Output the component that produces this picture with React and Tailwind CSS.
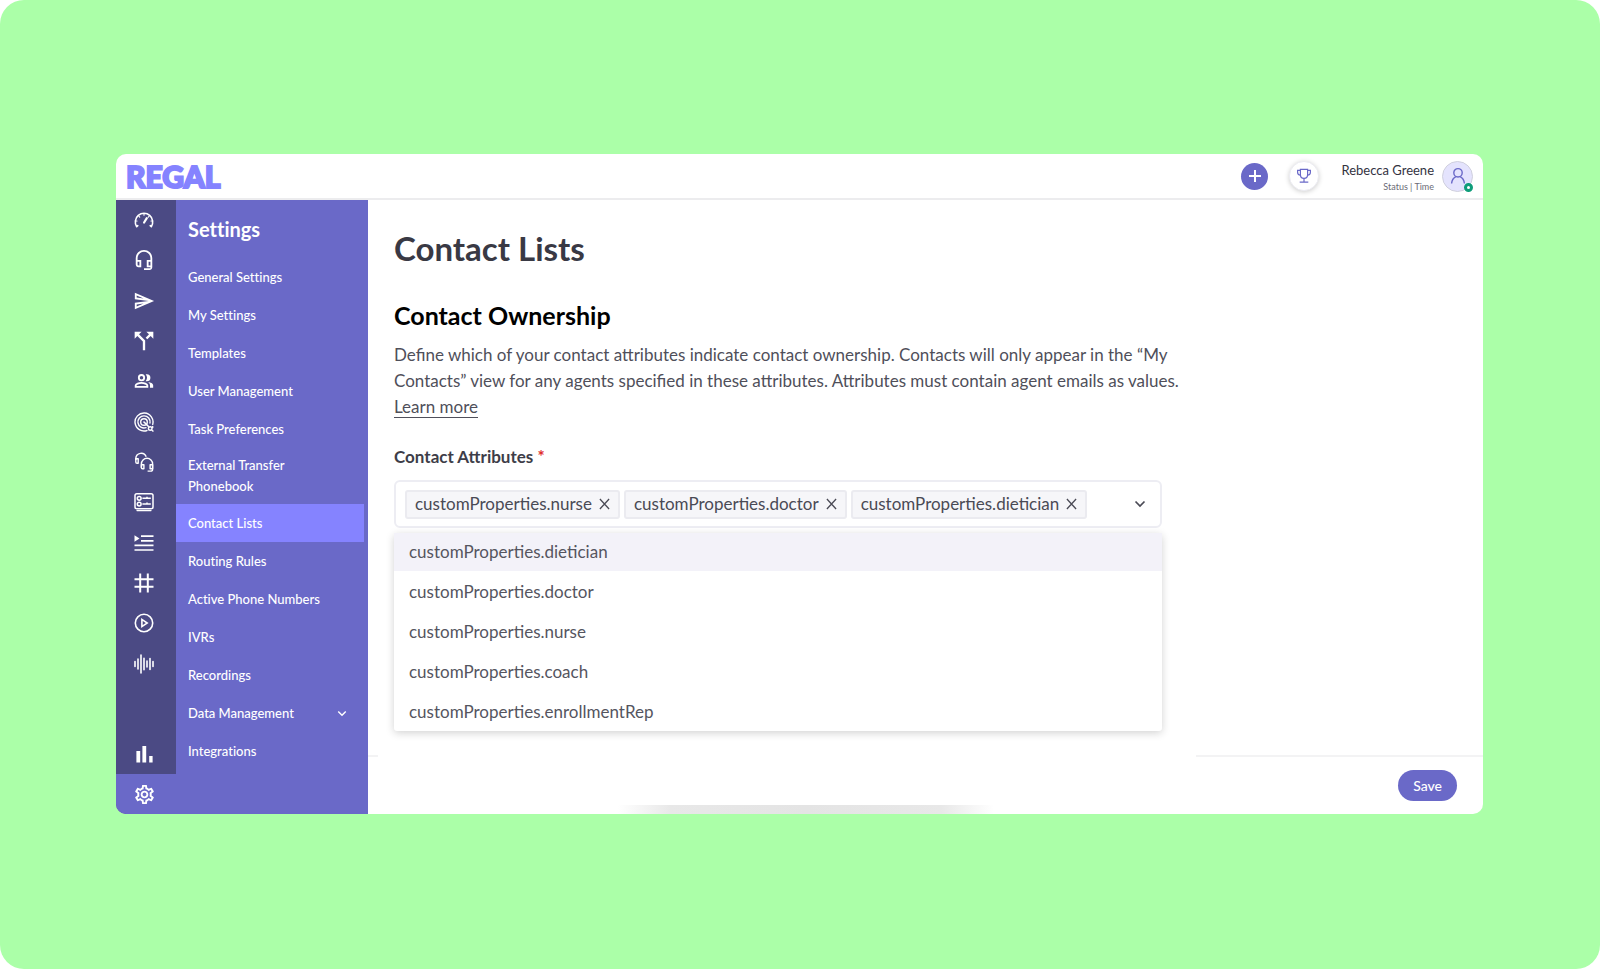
// App.jsx
import React, { useState } from 'react';
import {
  MdCallSplit,
  MdOutlineHeadsetMic,
  MdOutlineSend,
  MdOutlineSettings,
} from 'react-icons/md';

const GaugeIcon = () => (
  <svg viewBox="0 0 20 16" className="w-5 h-4" fill="none" stroke="currentColor" strokeLinecap="round" strokeLinejoin="round">
    <path d="M3.8 13.7L2.7 14.7A8.7 8.7 0 1 1 17.3 14.7L16.2 13.7" strokeWidth="1.6" />
    <path d="M10 2v1.2M5 4.3l.7.8M15 4.3l-.7.8M2.2 9h.8M17.8 9h-.8" strokeWidth="1.2" />
    <path d="M12.8 6.2l-2.7 4.3" strokeWidth="2.2" />
  </svg>
);

const PeopleIcon = () => (
  <svg viewBox="0 0 24 24" className="w-5 h-5">
    <g fill="none" stroke="currentColor" strokeWidth="2.2">
      <circle cx="9" cy="8" r="3.2" />
      <path d="M2 19v-1.500c0-2 4-3.200 7-3.200s7 1.200 7 3.200V19z" />
    </g>
    <g fill="currentColor">
      <path d="M14 12.2c.5.2.9.2 1.4.2a4.3 4.3 0 0 0 0-8.6c-.5 0-.9 0-1.4.2a6.5 6.5 0 0 1 0 8.2z" />
      <path d="M17 13.3c1.400 1 2.200 2.300 2.200 4V20H23v-2.800c0-2.200-3.200-3.500-6-3.900z" />
    </g>
  </svg>
);

const TargetIcon = () => (
  <svg viewBox="0 0 20 20" className="w-5 h-5" fill="none" stroke="currentColor" strokeWidth="1.4" strokeLinecap="round">
    <path d="M13 18.500A9 9 0 1 1 18.700 12.400" />
    <path d="M12 15.700A6.100 6.100 0 1 1 16 11" />
    <circle cx="10" cy="10" r="3.300" />
    <path d="M10 10l4.500 4.500" strokeWidth="1.600" />
    <circle cx="16.200" cy="16.500" r="1.800" />
    <path d="M18.700 14.400v1.200M18.200 18.500l.8.600" />
  </svg>
);

const HeadsetsIcon = () => (
  <svg viewBox="0 0 20 20" className="w-5 h-5" fill="none" stroke="currentColor" strokeWidth="1.4" strokeLinejoin="round">
    <path d="M1.800 8V6.400a5.400 5.400 0 0 1 10.400-1.700" />
    <path d="M1.800 6.800h2.400v4.400H3a1.200 1.200 0 0 1-1.200-1.200z" />
    <path d="M7.400 15.800v-3.900a5.600 5.600 0 0 1 11.200 0v5.300c0 1.200-.8 1.900-2 1.900h-3" />
    <path d="M7.400 12.800h2.500v4H8.400a1 1 0 0 1-1-1zM18.600 12.800h-2.500v4h2.500z" />
  </svg>
);

const FormIcon = () => (
  <svg viewBox="0 0 20 20" className="w-5 h-5" fill="none" stroke="currentColor" strokeWidth="1.5">
    <rect x="1" y="1.700" width="18" height="15" rx="1.800" />
    <path d="M3 18.600h14" strokeWidth="1.300" strokeLinecap="round" />
    <circle cx="5.200" cy="6.300" r="1.900" />
    <circle cx="5.200" cy="12.100" r="1.900" />
    <path d="M8.400 6.300h8.400M8.400 12.100h8.400M13 4.800v1.500M13 10.600v1.500" />
  </svg>
);

const QueueIcon = () => (
  <svg viewBox="0 0 20 18" className="w-5 h-[18px]" fill="none" stroke="currentColor" strokeWidth="1.7">
    <path d="M7 2.200h12.500M7 6.800h12.500M.5 11.400h19M.5 16h19" />
    <path d="M.5 1.200v6.600l5-3.300z" fill="currentColor" stroke="none" />
  </svg>
);

const HashIcon = () => (
  <svg viewBox="0 0 20 20" className="w-5 h-5" fill="none" stroke="currentColor" strokeWidth="2">
    <path d="M6.200.5v19M13.800.5v19M.5 6.200h19M.5 13.800h19" />
  </svg>
);

const PlayIcon = () => (
  <svg viewBox="0 0 20 20" className="w-5 h-5" fill="none" stroke="currentColor" strokeWidth="1.6">
    <circle cx="10" cy="10" r="8.700" />
    <path d="M7.900 6.400v7.200l5.300-3.600z" />
  </svg>
);

const WaveIcon = () => (
  <svg viewBox="0 0 20 20" className="w-5 h-5" stroke="currentColor" strokeWidth="1.6" strokeLinecap="round">
    <path d="M1 7.500v5M4 5v10M7 1v18M10 4.200v11.600M13 7v6M16 4.500v11M19 7.500v5" />
  </svg>
);

const BarsIcon = () => (
  <svg viewBox="0 0 18 18" className="w-[18px] h-[18px]" fill="currentColor">
    <path d="M1.400 6h3.800v11.600H1.400zM7.400 1h3.800v16.600H7.400zM14.200 11h3.400v6.600h-3.400z" />
  </svg>
);

const TrophyIcon = () => (
  <svg viewBox="0 0 16 16" className="w-4 h-4" fill="none" stroke="currentColor" strokeWidth="1.2">
    <path d="M4.400 1.400h7.200v5c0 2.400-1.400 3.900-3.600 3.900S4.400 8.800 4.400 6.400z" />
    <path d="M4.400 2.400H1.600v1.800c0 1.700 1 2.800 2.800 2.900M11.600 2.400h2.800v1.800c0 1.700-1 2.800-2.800 2.900M8 10.300v3.400M3.700 14.200h8.600" />
  </svg>
);

const ChevronIcon = ({ className }) => (
  <svg viewBox="0 0 12 8" className={className} fill="none" stroke="currentColor" strokeWidth="1.7">
    <path d="M1.500 1.500L6 6l4.500-4.500" />
  </svg>
);

const railItems = [
  { label: 'Dashboard', icon: <GaugeIcon /> },
  { label: 'Agent Desktop', icon: <MdOutlineHeadsetMic className="w-[22px] h-[22px]" /> },
  { label: 'Campaigns', icon: <MdOutlineSend className="w-[22px] h-[22px]" /> },
  { label: 'Journeys', icon: <MdCallSplit className="w-7 h-7" /> },
  { label: 'Contacts', icon: <PeopleIcon /> },
  { label: 'Segments', icon: <TargetIcon /> },
  { label: 'Teams', icon: <HeadsetsIcon /> },
  { label: 'Forms', icon: <FormIcon /> },
  { label: 'Queues', icon: <QueueIcon /> },
  { label: 'Numbers', icon: <HashIcon /> },
  { label: 'Playback', icon: <PlayIcon /> },
  { label: 'Voice', icon: <WaveIcon /> },
];

const settingsItems = [
  'General Settings',
  'My Settings',
  'Templates',
  'User Management',
  'Task Preferences',
  'External Transfer Phonebook',
  'Contact Lists',
  'Routing Rules',
  'Active Phone Numbers',
  'IVRs',
  'Recordings',
  'Data Management',
  'Integrations',
];

const options = [
  'customProperties.dietician',
  'customProperties.doctor',
  'customProperties.nurse',
  'customProperties.coach',
  'customProperties.enrollmentRep',
];

const Header = () => (
  <header className="flex items-center justify-between h-[46px] px-[10px] border-b-2 border-[#ececee] shrink-0">
    <a href="#home" className="font-black text-[30px] leading-none text-[#8583ff] [-webkit-text-stroke:2px_#8583ff]">
      REGAL
    </a>
    <div className="flex items-center">
      <button aria-label="Create" className="flex items-center justify-center w-[27px] h-[27px] rounded-full bg-[#6a69c8] text-white">
        <svg viewBox="0 0 12 12" className="w-3 h-3" stroke="currentColor" strokeWidth="2">
          <path d="M6 0v12M0 6h12" />
        </svg>
      </button>
      <button
        aria-label="Leaderboard"
        className="flex items-center justify-center w-[30px] h-[30px] ml-[21px] rounded-full border border-[#ececf2] bg-white text-[#6a69c8] shadow-[0_1px_5px_rgba(0,0,0,0.2)]"
      >
        <TrophyIcon />
      </button>
      <div className="ml-[22px] pt-0.5 text-right">
        <div className="text-[13px] leading-[18px] text-[#33333f]">Rebecca Greene</div>
        <div className="text-[9px] leading-[15px] text-[#6b6b76]">Status | Time</div>
      </div>
      <button
        aria-label="Account"
        className="relative flex items-center justify-center w-[31px] h-[31px] ml-2 rounded-full border border-[#cfcfdd] bg-[#e4e3fd] text-[#6a69c8]"
      >
        <svg viewBox="0 0 16 18" className="w-4 h-[18px]" fill="none" stroke="currentColor" strokeWidth="1.4">
          <circle cx="8" cy="5.800" r="4.200" />
          <path d="M1.600 16.500c.3-3.700 2.200-5.900 4.400-6.900M14.400 16.500c-.3-3.700-2.200-5.900-4.400-6.900" />
        </svg>
        <span className="absolute -right-px -bottom-px w-[9px] h-[9px] rounded-full border-[3px] border-[#0f9d7a] bg-white" />
      </button>
    </div>
  </header>
);

const Rail = () => (
  <nav aria-label="Main" className="flex flex-col w-[60px] shrink-0 bg-[#4b4a84] text-white">
    <div className="flex flex-col flex-1">
      {railItems.map(item => (
        <a key={item.label} href="#main" aria-label={item.label} className="flex flex-1 items-center justify-center pr-1">
          {item.icon}
        </a>
      ))}
    </div>
    <a href="#reports" aria-label="Reports" className="flex items-center justify-center h-10 mt-[50px] pr-1">
      <BarsIcon />
    </a>
    <a href="#settings" aria-label="Settings" className="flex items-center justify-center h-10 pr-1 bg-[#6a69c8]">
      <MdOutlineSettings className="w-[23px] h-[23px]" />
    </a>
  </nav>
);

const Sidebar = () => (
  <nav aria-label="Settings" className="w-48 shrink-0 bg-[#6a69c8] text-white [font-variant-ligatures:none]">
    <h2 className="px-3 pt-4 pb-4 text-[20px] leading-[26px] font-bold">Settings</h2>
    <ul className="pr-1">
      {settingsItems.map(item => (
        <li key={item}>
          <a
            href="#section"
            className={`flex items-center justify-between min-h-[38px] py-[7px] pl-3 pr-[17px] text-[13px] leading-[21px] font-medium ${
              item === 'Contact Lists' ? 'bg-[#8583ff]' : ''
            }`}
          >
            {item}
            {item === 'Data Management' && <ChevronIcon className="w-[10px] h-[7px]" />}
          </a>
        </li>
      ))}
    </ul>
  </nav>
);

const AttributePicker = () => {
  const [selected, setSelected] = useState([
    'customProperties.nurse',
    'customProperties.doctor',
    'customProperties.dietician',
  ]);

  const removeItem = (name) => {
    setSelected(prev => prev.filter(item => item !== name));
  };

  const addItem = (name) => {
    setSelected(prev => (prev.includes(name) ? prev : [...prev, name]));
  };

  return (
    <div className="max-w-[768px]">
      <div id="attributes-label" className="mt-[25px] text-[17px] leading-6 font-bold text-[#3d3d48]">
        Contact Attributes <span className="text-[#e02b2b]">*</span>
      </div>
      <div
        role="group"
        aria-labelledby="attributes-label"
        className="flex items-center gap-1 h-12 mt-[11px] pl-[9px] pr-[14px] border-2 border-[#ededf3] rounded-md"
      >
        {selected.map(item => (
          <span
            key={item}
            className="flex items-center gap-[7px] h-[29px] px-2 border-2 border-[#ebebf0] rounded-[3px] bg-[#f6f6f9] text-[17px] text-[#4a4a55]"
          >
            {item}
            <button aria-label={`Remove ${item}`} onClick={() => removeItem(item)}>
              <svg viewBox="0 0 12 12" className="w-[11px] h-3" stroke="currentColor" strokeWidth="1.4">
                <path d="M1 .5l10 11M11 .5l-10 11" />
              </svg>
            </button>
          </span>
        ))}
        <button aria-label="Toggle options" className="ml-auto text-[#4a4a55]">
          <ChevronIcon className="w-3 h-2" />
        </button>
      </div>
      <ul
        role="listbox"
        aria-labelledby="attributes-label"
        className="flex flex-col gap-0.5 mt-[5px] rounded-[3px] bg-white shadow-[0_2px_8px_rgba(0,0,0,0.18)]"
      >
        {options.map((item, index) => (
          <li
            key={item}
            role="option"
            aria-selected={selected.includes(item)}
            onClick={() => addItem(item)}
            className={`flex items-center h-[38px] px-[15px] text-[17px] text-[#55555f] cursor-pointer ${
              index === 0 ? 'bg-[#f3f2f9]' : ''
            }`}
          >
            {item}
          </li>
        ))}
      </ul>
    </div>
  );
};

const App = () => {
  return (
    <div className="flex min-h-screen bg-white font-['Lato',sans-serif]">
      <div className="flex flex-1 rounded-[24px] bg-[#abffa8] pl-[116px] pr-[117px] pt-[154px] pb-[155px]">
        <div className="flex flex-col flex-1 rounded-[10px] overflow-hidden bg-white">
          <Header />
          <div className="flex flex-1">
            <Rail />
            <Sidebar />
            <div className="flex flex-col flex-1">
              <main className="flex-1 px-[26px]">
                <h1 className="mt-[27px] text-[33px] leading-[42px] font-bold text-[#393944]">Contact Lists</h1>
                <h2 className="mt-[30px] text-[25px] leading-8 font-bold text-black">Contact Ownership</h2>
                <p className="mt-[11px] text-[17px] leading-[26px] text-[#4f4f5a]">
                  Define which of your contact attributes indicate contact ownership. Contacts will only appear in the “My
                  <br />
                  Contacts” view for any agents specified in these attributes. Attributes must contain agent emails as values.
                  <br />
                  <a href="#learn" className="border-b border-[#4f4f5a]">Learn more</a>
                </p>
                <AttributePicker />
              </main>
              <footer>
                <div className="flex justify-between">
                  <div className="w-[10px] h-0.5 bg-[#f3f3f4]" />
                  <div className="w-[287px] h-0.5 bg-[#f3f3f4]" />
                </div>
                <div className="relative flex items-center justify-end h-[57px] px-[26px]">
                  <button className="h-[31px] px-[15px] rounded-full bg-[#6a69c8] text-[14px] font-medium text-white">Save</button>
                  <div className="absolute bottom-0 left-[250px] w-[376px] h-[9px] bg-[linear-gradient(to_right,transparent,#e8e8e8_14%,#e4e4e4_50%,#e8e8e8_86%,transparent)]" />
                </div>
              </footer>
            </div>
          </div>
        </div>
      </div>
    </div>
  );
};

export default App;
